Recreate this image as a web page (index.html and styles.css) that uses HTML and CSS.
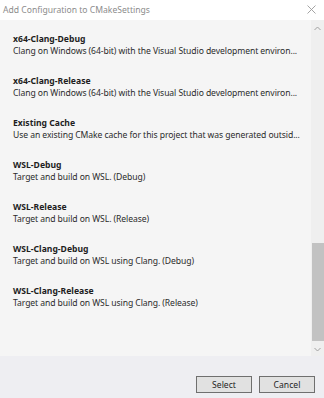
FILE: index.html
```html
<!DOCTYPE html>
<html lang="en">
<head>
  <meta charset="UTF-8" />
  <meta name="viewport" content="width=device-width, initial-scale=1.0"/>
  <title>Add Configuration to CMakeSettings</title>
  <link rel="stylesheet" href="styles.css">
</head>
<body>
  <div class="dialog">
    <div class="titlebar">
      <span class="title">Add Configuration to CMakeSettings</span>
      <svg class="close" width="9" height="9" viewBox="0 0 9 9">
        <path d="M0.5 0.5 L8.5 8.5 M8.5 0.5 L0.5 8.5" stroke="#9a9a9a" stroke-width="0.9" fill="none"/>
      </svg>
    </div>

    <div class="list-wrap">
      <div class="list">
        <div class="item">
          <div class="name">x64-Clang-Debug</div>
          <div class="desc">Clang on Windows (64-bit) with the Visual Studio development environ...</div>
        </div>
        <div class="item">
          <div class="name">x64-Clang-Release</div>
          <div class="desc">Clang on Windows (64-bit) with the Visual Studio development environ...</div>
        </div>
        <div class="item">
          <div class="name">Existing Cache</div>
          <div class="desc">Use an existing CMake cache for this project that was generated outsid...</div>
        </div>
        <div class="item">
          <div class="name">WSL-Debug</div>
          <div class="desc">Target and build on WSL. (Debug)</div>
        </div>
        <div class="item">
          <div class="name">WSL-Release</div>
          <div class="desc">Target and build on WSL. (Release)</div>
        </div>
        <div class="item">
          <div class="name">WSL-Clang-Debug</div>
          <div class="desc">Target and build on WSL using Clang. (Debug)</div>
        </div>
        <div class="item">
          <div class="name">WSL-Clang-Release</div>
          <div class="desc">Target and build on WSL using Clang. (Release)</div>
        </div>
      </div>

      <!-- fake scrollbar, list is scrolled to the bottom -->
      <div class="scrollbar">
        <svg class="arrow" width="7" height="5" viewBox="0 0 7 5">
          <path d="M0.5 4 L3.5 1 L6.5 4" stroke="#a0a0a0" stroke-width="1" fill="none"/>
        </svg>
        <div class="track">
          <div class="thumb"></div>
        </div>
        <svg class="arrow" width="7" height="5" viewBox="0 0 7 5">
          <path d="M0.5 1 L3.5 4 L6.5 1" stroke="#a0a0a0" stroke-width="1" fill="none"/>
        </svg>
      </div>
    </div>

    <div class="footer">
      <button class="btn">Select</button>
      <button class="btn">Cancel</button>
    </div>
  </div>
</body>
</html>
```

FILE: styles.css
```css
html, body {
  margin: 0;
  padding: 0;
  background: #eeeef2;
  font-family: "Noto Sans", "Open Sans", sans-serif;
  overflow: hidden;
}

.dialog {
  width: 324px;
  height: 398px;
  display: flex;
  flex-direction: column;
}

.titlebar {
  height: 20px;
  background: #ffffff;
  display: flex;
  align-items: center;
  justify-content: space-between;
  padding: 0 8px 0 3px;
}

.title {
  font-size: 8.6px;
  color: #8c8c8c;
}

.close {
  margin-top: -2px;
}

.list-wrap {
  height: 336px;
  background: #f5f5f5;
  display: flex;
}

.list {
  flex: 1;
  padding-top: 7px;
  overflow: hidden;
}

.item {
  height: 24px;
  padding: 6px 4px 12px 13px;
  color: #1e1e1e;
}

.name {
  font-size: 8.6px;
  font-weight: bold;
  line-height: 12px;
}

.desc {
  font-size: 8.6px;
  line-height: 12px;
  letter-spacing: -0.08px;
  color: #2b2b2b;
  white-space: nowrap;
}

.scrollbar {
  width: 13px;
  background: #efefef;
  display: flex;
  flex-direction: column;
  align-items: center;
  padding: 6px 0 4px;
  gap: 4px;
}

.track {
  flex: 1;
  width: 12px;
  display: flex;
  flex-direction: column;
  justify-content: flex-end;
  padding-bottom: 2px;
}

.thumb {
  height: 98px;
  background: #c2c2c2;
}

.footer {
  flex: 1;
  display: flex;
  justify-content: flex-end;
  align-items: flex-start;
  gap: 7px;
  padding: 20px 9px 0 0;
}

.btn {
  width: 56px;
  height: 17px;
  padding: 0;
  background: #e1e1e1;
  border: 1px solid #6f6f6f;
  font-family: inherit;
  font-size: 8.6px;
  color: #1e1e1e;
}
```
